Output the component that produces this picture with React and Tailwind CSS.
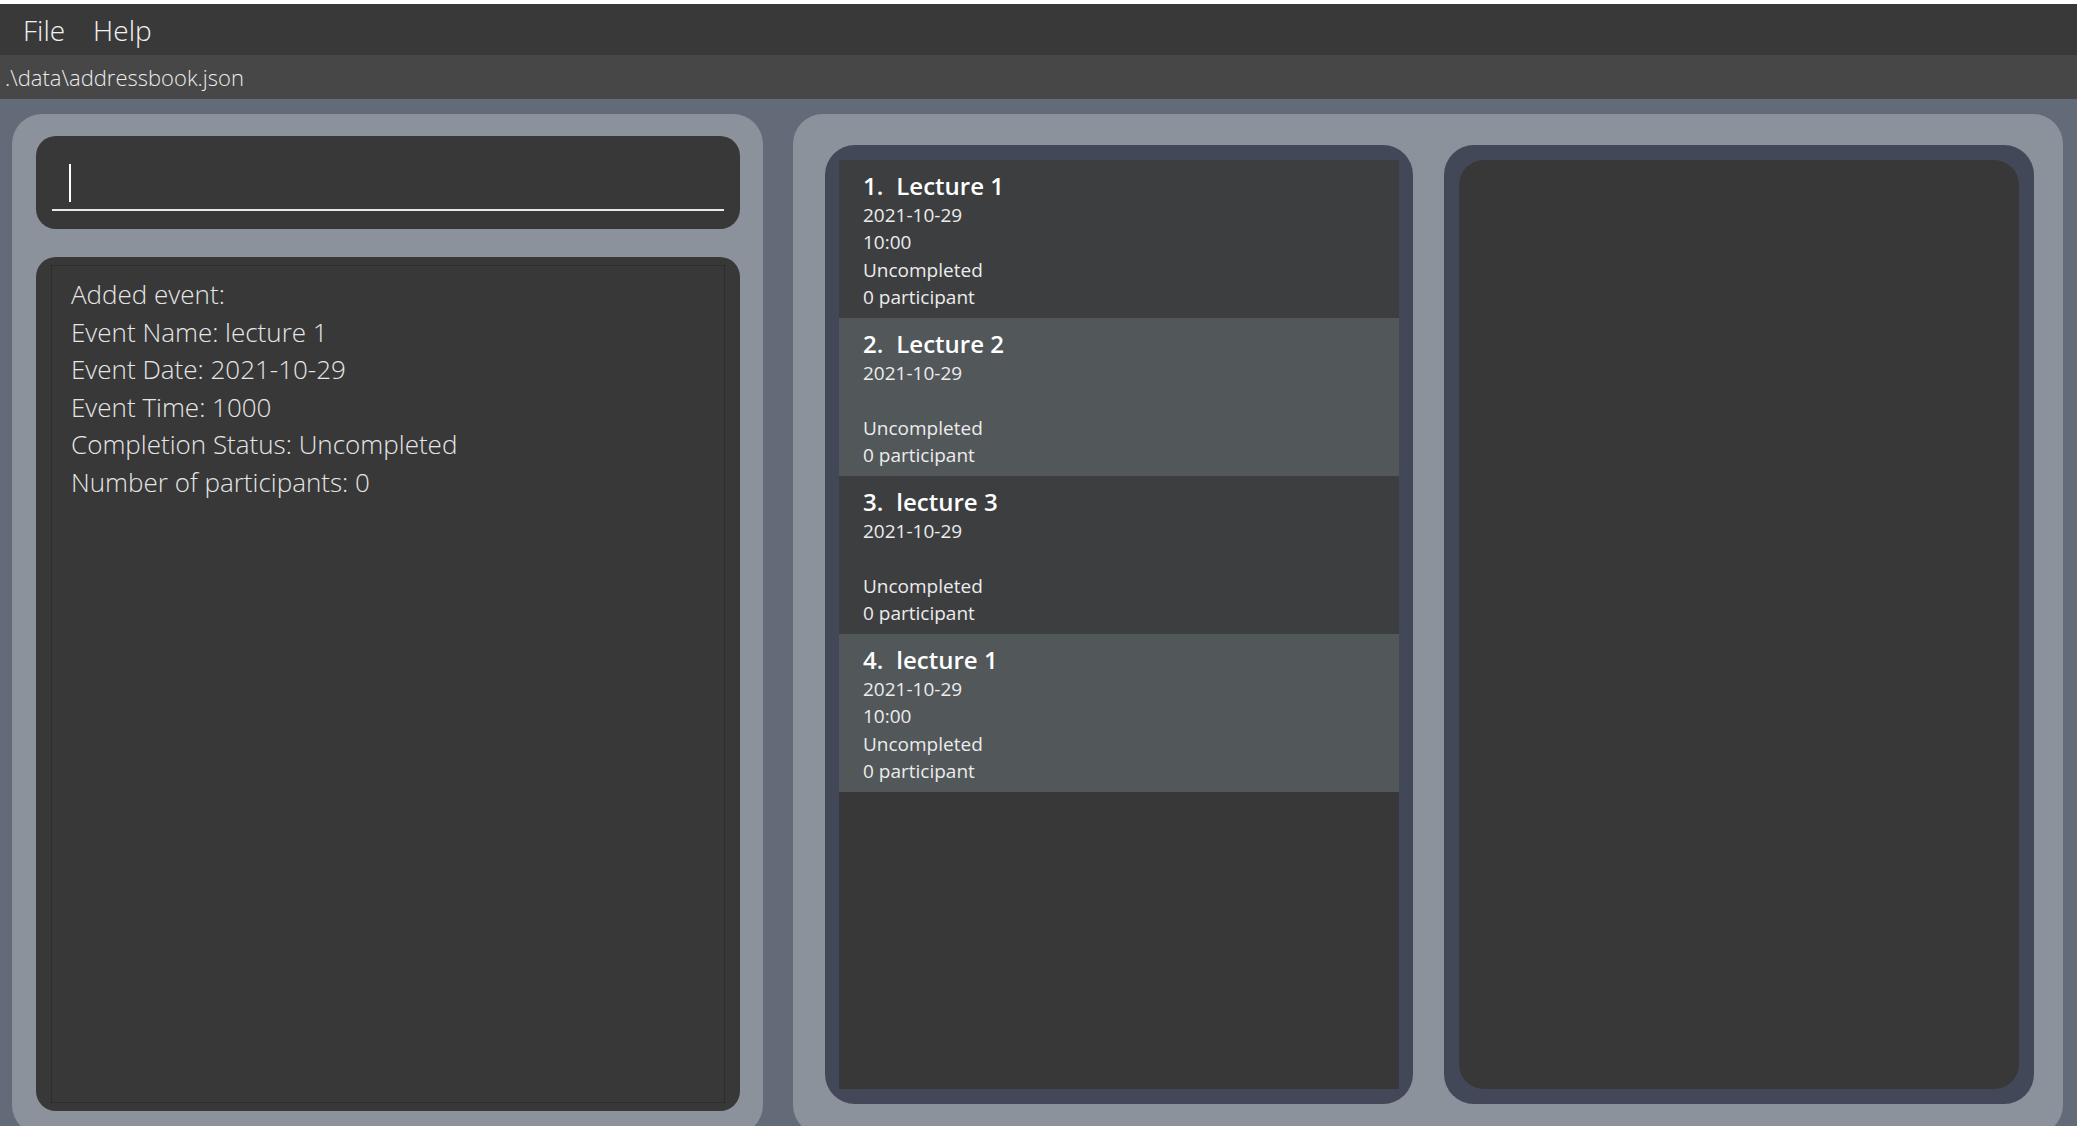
const events = [
  { id: 1, name: 'Lecture 1', date: '2021-10-29', time: '10:00', status: 'Uncompleted', people: '0 participant' },
  { id: 2, name: 'Lecture 2', date: '2021-10-29', time: '', status: 'Uncompleted', people: '0 participant' },
  { id: 3, name: 'lecture 3', date: '2021-10-29', time: '', status: 'Uncompleted', people: '0 participant' },
  { id: 4, name: 'lecture 1', date: '2021-10-29', time: '10:00', status: 'Uncompleted', people: '0 participant' },
];

const feedback = [
  'Added event:',
  'Event Name: lecture 1',
  'Event Date: 2021-10-29',
  'Event Time: 1000',
  'Completion Status: Uncompleted',
  'Number of participants: 0',
];

function EventCard({ event, index }) {
  const bg = index % 2 === 0 ? 'bg-[#3d3e40]' : 'bg-[#52575a]';
  return (
    <div className={`${bg} h-[158px] pl-[24px] pt-[10px] shrink-0`}>
      <div className="flex items-center h-[32px] text-[24px] font-semibold text-white leading-none gap-[13px]">
        <span>{event.id}.</span>
        <span>{event.name}</span>
      </div>
      <div className="text-[19px] leading-[27.3px] text-[#ececec]">
        <div className="h-[27.3px]">{event.date}</div>
        <div className="h-[27.3px]">{event.time}</div>
        <div className="h-[27.3px]">{event.status}</div>
        <div className="h-[27.3px]">{event.people}</div>
      </div>
    </div>
  );
}

export default function App() {
  return (
    <div
      className="w-[2077px] h-[1126px] overflow-hidden bg-[#636a78] flex flex-col"
      style={{ fontFamily: '"Open Sans", "Liberation Sans", sans-serif' }}
    >
      {/* window edge */}
      <div className="h-[4px] bg-white shrink-0"></div>

      {/* menu bar */}
      <div className="h-[51px] bg-[#393939] flex items-center pl-[23px] gap-[28px] text-[28px] font-light text-[#f2f2f2] shrink-0">
        <span>File</span>
        <span>Help</span>
      </div>

      {/* status path */}
      <div className="h-[44px] bg-[#474747] flex items-center pl-[5px] text-[22px] font-light text-[#ececec] shrink-0">
        .\data\addressbook.json
      </div>

      {/* panels */}
      <div className="flex gap-[30px] pl-[12px] pt-[15px]">
        {/* left side */}
        <div className="w-[751px] h-[1021px] bg-[#8b929c] rounded-[30px] pl-[24px] pr-[23px] pt-[22px] flex flex-col shrink-0">
          <div className="h-[93px] bg-[#383838] rounded-[20px] px-[16px] pt-[22px] shrink-0">
            <div className="h-[53px] border-b-2 border-[#e8e8e8] pl-[17px] pt-[6px]">
              <div className="w-[2px] h-[38px] bg-white"></div>
            </div>
          </div>

          <div className="mt-[28px] h-[854px] bg-[#383838] rounded-[20px] px-[15px] py-[8px] shrink-0">
            <div className="h-full border border-[#2d2d2d] pl-[19px] pt-[10px] text-[26px] font-light leading-[37.6px] text-[#e6e6e6]">
              {feedback.map((line) => (
                <div key={line}>{line}</div>
              ))}
            </div>
          </div>
        </div>

        {/* right side */}
        <div className="w-[1270px] h-[1021px] bg-[#8b929c] rounded-[30px] pl-[32px] pt-[31px] flex gap-[31px] shrink-0">
          <div className="w-[588px] h-[959px] bg-[#424857] rounded-[30px] px-[14px] py-[15px] shrink-0">
            <div className="h-full bg-[#383838] flex flex-col">
              {events.map((ev, i) => (
                <EventCard key={ev.id} event={ev} index={i} />
              ))}
            </div>
          </div>

          <div className="w-[590px] h-[959px] bg-[#424857] rounded-[30px] p-[15px] shrink-0">
            <div className="h-full bg-[#383838] rounded-[25px]"></div>
          </div>
        </div>
      </div>
    </div>
  );
}
